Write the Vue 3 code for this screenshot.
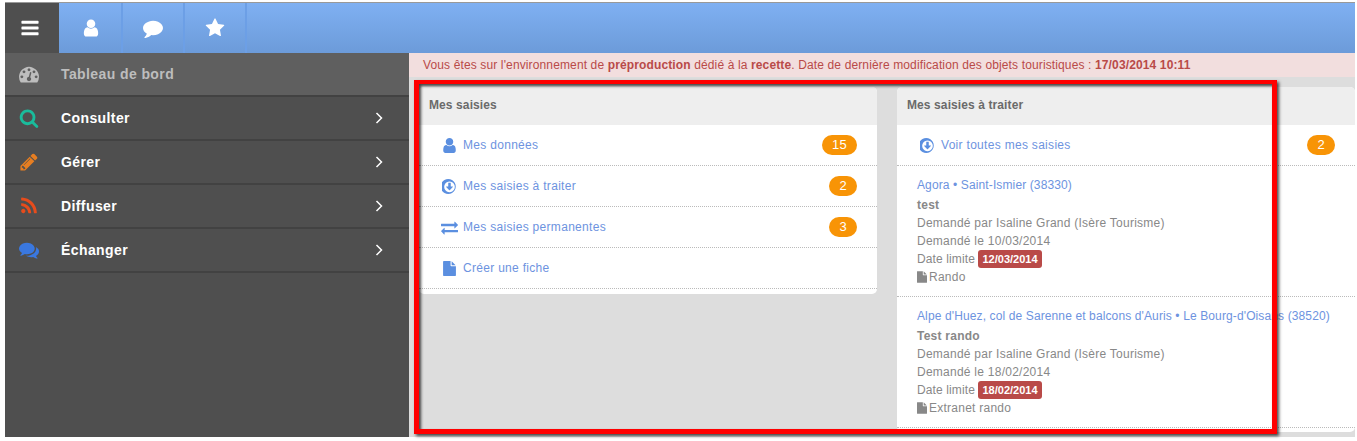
<template>
  <div class="page">
    <header class="topbar">
      <div class="menu-btn"><svg class="ico" viewBox="0 0 1792 1792"><path :d="icons.bars" /></svg></div>
      <div v-for="tab in tabs" :key="tab" class="tab"><svg class="ico" viewBox="0 0 1792 1792"><path :d="icons[tab]" /></svg></div>
    </header>
    <div class="body">
      <nav class="sidebar">
        <a v-for="item in menu" :key="item.label" class="side-item" :class="{ active: item.active }">
          <svg class="side-ico" viewBox="0 0 1792 1792" :style="{ fill: item.color }"><path :d="icons[item.icon]" /></svg>
          <span class="side-label">{{ item.label }}</span>
          <svg v-if="!item.active" class="chev" viewBox="0 0 8 12"><path d="M1.500 1 L6.500 6 L1.500 11" /></svg>
        </a>
      </nav>
      <main class="main">
        <p class="notice">Vous êtes sur l'environnement de <b>préproduction</b> dédié à la <b>recette</b>. Date de dernière modification des objets touristiques : <b>17/03/2014 10:11</b></p>
        <div class="columns">
          <section class="panel panel-left">
            <h3 class="panel-head">Mes saisies</h3>
            <a v-for="row in rows" :key="row.label" class="row">
              <svg class="row-ico" :class="{ wide: row.icon === 'exchange' }" :viewBox="row.box"><path :d="icons[row.icon]" /></svg>
              <span class="row-label">{{ row.label }}</span>
              <span v-if="row.count" class="badge">{{ row.count }}</span>
            </a>
          </section>
          <section class="panel panel-right">
            <h3 class="panel-head">Mes saisies à traiter</h3>
            <a class="row">
              <svg class="row-ico" viewBox="0 128 1536 1536"><path :d="icons.circleDown" /></svg>
              <span class="row-label">Voir toutes mes saisies</span>
              <span class="badge">2</span>
            </a>
            <div v-for="entry in entries" :key="entry.place" class="entry">
              <a class="entry-place">{{ entry.place }}</a>
              <strong class="entry-title">{{ entry.title }}</strong>
              <span>Demandé par Isaline Grand (Isère Tourisme)</span>
              <span>Demandé le {{ entry.asked }}</span>
              <span class="entry-limit">Date limite <em class="late">{{ entry.limit }}</em></span>
              <span class="entry-type"><svg class="type-ico" viewBox="128 0 1536 1792"><path :d="icons.file" /></svg>{{ entry.type }}</span>
            </div>
          </section>
        </div>
      </main>
    </div>
    <div class="highlight"></div>
  </div>
</template>

<script setup>
const icons = {
  bars: 'M1664 1344v128q0 26-19 45t-45 19h-1408q-26 0-45-19t-19-45v-128q0-26 19-45t45-19h1408q26 0 45 19t19 45zm0-512v128q0 26-19 45t-45 19h-1408q-26 0-45-19t-19-45v-128q0-26 19-45t45-19h1408q26 0 45 19t19 45zm0-512v128q0 26-19 45t-45 19h-1408q-26 0-45-19t-19-45v-128q0-26 19-45t45-19h1408q26 0 45 19t19 45z',
  user: 'M1536 1399q0 109-62.500 187t-150.500 78h-854q-88 0-150.500-78t-62.500-187q0-85 8.500-160.500t31.500-152 58.500-131 94-89 134.500-34.500q131 128 313 128t313-128q76 0 134.500 34.500t94 89 58.500 131 31.500 152 8.500 160.500zm-256-887q0 159-112.500 271.500t-271.500 112.500-271.500-112.500-112.500-271.500 112.500-271.500 271.500-112.500 271.500 112.500 112.500 271.500z',
  comment: 'M1792 896q0 174-120 321.500t-326 233-450 85.500q-70 0-145-8-198 175-460 242-49 14-114 22-17 2-30.500-9t-17.500-29v-1q-3-4-.5-12t2-10 4.500-9.500l6-9 7-8.500 8-9q7-8 31-34.500t34.500-38 31-39.500 32.500-51 27-59 26-76q-157-89-247.500-220t-90.500-281q0-130 71-248.500t191-204.500 286-136.500 348-50.500q244 0 450 85.500t326 233 120 321.500z',
  star: 'M1728 647q0 22-26 48l-363 354 86 500q1 7 1 20 0 21-10.500 35.500t-30.500 14.500q-19 0-40-12l-449-236-449 236q-22 12-40 12-21 0-31.500-14.500t-10.500-35.500q0-6 2-20l86-500-364-354q-25-27-25-48 0-37 56-46l502-73 225-455q19-41 49-41t49 41l225 455 502 73q56 9 56 46z',
  dashboard: 'M384 1152q0-53-37.500-90.500t-90.500-37.500-90.500 37.500-37.500 90.500 37.500 90.500 90.500 37.500 90.500-37.500 37.500-90.500zm192-448q0-53-37.500-90.500t-90.500-37.500-90.500 37.500-37.500 90.500 37.500 90.500 90.500 37.500 90.500-37.500 37.500-90.500zm428 481l101-382q6-26-7.500-48.500t-38.500-29.500-48 6.500-30 39.500l-101 382q-60 5-107 43.500t-63 98.500q-20 77 20 146t117 89 146-20 89-117q16-60-6-117t-72-91zm660-33q0-53-37.500-90.500t-90.500-37.500-90.500 37.500-37.500 90.500 37.500 90.500 90.500 37.500 90.500-37.500 37.500-90.500zm-640-640q0-53-37.500-90.500t-90.500-37.500-90.500 37.500-37.500 90.500 37.500 90.500 90.500 37.500 90.500-37.500 37.500-90.500zm448 192q0-53-37.500-90.500t-90.500-37.500-90.500 37.500-37.500 90.500 37.500 90.500 90.500 37.500 90.500-37.500 37.500-90.500zm320 448q0 261-141 483-19 29-54 29h-1402q-35 0-54-29-141-221-141-483 0-182 71-348t191-286 286-191 348-71 348 71 286 191 191 286 71 348z',
  search: 'M1216 832q0-185-131.500-316.500t-316.500-131.500-316.500 131.500-131.500 316.500 131.500 316.500 316.500 131.500 316.500-131.500 131.500-316.500zm512 832q0 52-38 90t-90 38q-54 0-90-38l-343-342q-179 124-399 124-143 0-273.500-55.500t-225-150-150-225-55.500-273.500 55.500-273.500 150-225 225-150 273.500-55.500 273.500 55.500 225 150 150 225 55.500 273.500q0 220-124 399l343 343q37 37 37 90z',
  pencil: 'M491 1536l91-91-235-235-91 91v107h128v128h107zm523-928q0-22-22-22-10 0-17 7l-542 542q-7 7-7 17 0 22 22 22 10 0 17-7l542-542q7-7 7-17zm-54-192l416 416-832 832h-416v-416zm683 96q0 53-37 90l-166 166-416-416 166-165q36-38 90-38 53 0 91 38l235 234q37 39 37 91z',
  rss: 'M576 1344q0 80-56 136t-136 56-136-56-56-136 56-136 136-56 136 56 56 136zm512 123q2 28-17 48-18 21-47 21h-135q-25 0-43-16.500t-20-41.500q-22-229-184.500-391.500t-391.500-184.500q-25-2-41.500-20t-16.500-43v-135q0-29 21-47 17-17 43-17h5q160 13 306 80.500t259 181.500q114 113 181.500 259t80.500 306zm512 2q2 27-18 47-18 20-46 20h-143q-26 0-44.500-17.500t-19.500-42.500q-12-215-101-408.500t-231.500-336-336-231.500-408.500-102q-25-1-42.500-19.500t-17.500-43.500v-143q0-28 20-46 18-18 44-18h3q262 13 501.500 120t425.500 294q187 186 294 425.500t120 501.500z',
  comments: 'M1408 768q0 139-94 257t-256.500 186.500-353.500 68.500q-86 0-176-16-124 88-278 128-36 9-86 16h-3q-11 0-20.500-8t-11.500-21q-1-3-1-6.500t.5-6.500 2-6l2.500-5 3.500-5.500 4-5 4.500-5 4-4.500q5-6 23-25t26-29.500 22.500-29 25-38.500 20.500-44q-124-72-195-177t-71-224q0-139 94-257t256.500-186.500 353.500-68.500 353.500 68.500 256.500 186.500 94 257zm384 256q0 120-71 224.500t-195 176.500q10 24 20.500 44t25 38.500 22.500 29 26 29.500 23 25q1 1 4 4.500t4.500 5 4 5 3.500 5.500l2.500 5 2 6 .5 6.500-1 6.500q-3 14-13 22t-22 7q-50-7-86-16-154-40-278-128-90 16-176 16-271 0-472-132 58 4 88 4 161 0 309-45t264-129q125-92 192-212t67-254q0-77-23-152 129 71 204 178t75 230z',
  circleDown: 'M1120 928q0 12-10 24l-319 319q-11 9-23 9t-23-9l-320-320q-15-16-7-35 8-20 30-20h192v-352q0-14 9-23t23-9h192q14 0 23 9t9 23v352h192q14 0 23 9t9 23zm-352-544q-148 0-273 73t-198 198-73 273 73 273 198 198 273 73 273-73 198-198 73-273-73-273-198-198-273-73zm640 512q0 209-103 385.500t-279.500 279.500-385.500 103-385.500-103-279.500-279.500-103-385.500 103-385.500 279.500-279.500 385.500-103 385.500 103 279.500 279.500 103 385.500z',
  exchange: 'M1792 1184v192q0 13-9.500 22.500t-22.500 9.500h-1376v192q0 13-9.500 22.500t-22.500 9.500q-12 0-24-10l-319-320q-9-9-9-22 0-14 9-23l320-320q9-9 23-9 13 0 22.500 9.500t9.500 22.500v192h1376q13 0 22.500 9.500t9.500 22.500zm0-544q0 14-9 23l-320 320q-9 9-23 9-13 0-22.500-9.500t-9.500-22.500v-192h-1376q-13 0-22.500-9.500t-9.500-22.500v-192q0-13 9.500-22.500t22.500-9.500h1376v-192q0-14 9-23t23-9q12 0 24 10l319 319q9 9 9 23z',
  file: 'M1152 512v-472q22 14 36 28l408 408q14 14 28 36h-472zm-128 32q0 40 28 68t68 28h544v1056q0 40-28 68t-68 28h-1344q-40 0-68-28t-28-68v-1600q0-40 28-68t68-28h800v544z'
}

const tabs = ['user', 'comment', 'star']

const menu = [
  { label: 'Tableau de bord', icon: 'dashboard', color: '#bdbdbd', active: true },
  { label: 'Consulter', icon: 'search', color: '#1abc9c' },
  { label: 'Gérer', icon: 'pencil', color: '#e67e22' },
  { label: 'Diffuser', icon: 'rss', color: '#e74c1c' },
  { label: 'Échanger', icon: 'comments', color: '#3a78e0' }
]

const rows = [
  { label: 'Mes données', icon: 'user', box: '128 128 1536 1536', count: 15 },
  { label: 'Mes saisies à traiter', icon: 'circleDown', box: '0 128 1536 1536', count: 2 },
  { label: 'Mes saisies permanentes', icon: 'exchange', box: '0 0 1792 1792', count: 3 },
  { label: 'Créer une fiche', icon: 'file', box: '0 0 1792 1792' }
]

const entries = [
  { place: 'Agora • Saint-Ismier (38330)', title: 'test', asked: '10/03/2014', limit: '12/03/2014', type: 'Rando' },
  { place: "Alpe d'Huez, col de Sarenne et balcons d'Auris • Le Bourg-d'Oisans (38520)", title: 'Test rando', asked: '18/02/2014', limit: '18/02/2014', type: 'Extranet rando' }
]
</script>

<style>
html, body {
  margin: 0;
  background: #fff;
  overflow: hidden;
}
</style>

<style scoped>
.page {
  position: relative;
  box-sizing: border-box;
  height: 441px;
  padding: 3px 2px 4px 5px;
  overflow: hidden;
  font-family: "Liberation Sans", Arial, sans-serif;
  font-size: 12px;
  letter-spacing: 0.3px;
  color: #888;
}
.topbar {
  display: flex;
  height: 50px;
  box-shadow: 0 -1px 0 #999;
  background: linear-gradient(#7fb0f2, #6c9bd9);
}
.menu-btn {
  display: flex;
  align-items: center;
  justify-content: center;
  box-sizing: border-box;
  width: 54px;
  padding-right: 5px;
  margin-right: 2px;
  background: #4f4f4f;
}
.tab {
  display: flex;
  align-items: center;
  justify-content: center;
  width: 60px;
  border-right: 2px solid #6c9fe6;
}
.ico {
  width: 20px;
  height: 20px;
  fill: #fff;
}
.body {
  display: flex;
  height: 384px;
}
.sidebar {
  width: 404px;
  flex: none;
  background: #4f4f4f;
}
.side-item {
  display: flex;
  align-items: center;
  box-sizing: border-box;
  height: 44px;
  padding: 0 26px 0 14px;
  border-bottom: 2px solid #424242;
  font-size: 14px;
  letter-spacing: 0.4px;
  font-weight: bold;
  color: #fff;
}
.side-item.active {
  background: #5f5f5f;
  color: #bdbdbd;
}
.side-ico {
  width: 20px;
  height: 20px;
  flex: none;
}
.side-label {
  flex: 1;
  margin-left: 22px;
}
.chev {
  width: 8px;
  height: 12px;
  fill: none;
  stroke: #fff;
  stroke-width: 1.500;
}
.main {
  flex: 1;
  min-width: 0;
  background: #ddd;
}
.notice {
  box-sizing: border-box;
  height: 24px;
  margin: 0 0 10px;
  padding-left: 14px;
  line-height: 24px;
  letter-spacing: 0.13px;
  background: #f2dede;
  color: #b94a48;
}
.columns {
  display: flex;
  gap: 20px;
  padding-left: 10px;
  align-items: flex-start;
}
.panel {
  flex: 1;
  border-radius: 5px;
  background: #fff;
  overflow: hidden;
}
.panel-left {
  padding-bottom: 5px;
}
.panel-right {
  height: 345px;
}
.panel-head {
  box-sizing: border-box;
  height: 38px;
  margin: 0;
  padding-left: 10px;
  line-height: 37px;
  font-size: 12px;
  letter-spacing: 0.1px;
  color: #6a6a6a;
  background: #eee;
}
.row {
  display: flex;
  align-items: center;
  box-sizing: border-box;
  height: 41px;
  padding: 0 20px 0 23px;
  border-bottom: 1px dotted #bbb;
  color: #6d93e0;
}
.row-ico {
  width: 15px;
  height: 15px;
  flex: none;
  fill: #5b8fe0;
}
.row-ico.wide {
  width: 17px;
  height: 17px;
  margin: 0 -1px;
}
.row-label {
  flex: 1;
  margin-left: 6px;
}
.badge {
  min-width: 7px;
  padding: 0 10px;
  border-radius: 10px;
  line-height: 20px;
  text-align: center;
  font-size: 13px;
  color: #fff;
  background: #f89406;
}
.entry {
  display: flex;
  flex-direction: column;
  align-items: flex-start;
  padding: 10px 20px;
  border-bottom: 1px dotted #bbb;
  line-height: 18px;
  letter-spacing: 0.25px;
  white-space: nowrap;
}
.entry-place {
  color: #6d93e0;
  margin-bottom: 2px;
  letter-spacing: 0.12px;
}
.entry-limit {
  letter-spacing: 0.12px;
}
.late {
  display: inline-block;
  padding: 0 4px;
  border-radius: 3px;
  line-height: 18px;
  font-size: 11px;
  letter-spacing: 0;
  font-style: normal;
  font-weight: bold;
  color: #fff;
  background: #b94a48;
}
.type-ico {
  width: 10px;
  height: 12px;
  margin-right: 2px;
  vertical-align: -2px;
  fill: #888;
}
.highlight {
  position: absolute;
  left: 414px;
  top: 80px;
  width: 863px;
  height: 354px;
  box-sizing: border-box;
  border: 5px solid #f00;
  border-top-width: 4px;
  box-shadow: 2px 2px 3px rgba(0, 0, 0, 0.7), inset 2px 2px 3px rgba(0, 0, 0, 0.7);
  pointer-events: none;
}
</style>
